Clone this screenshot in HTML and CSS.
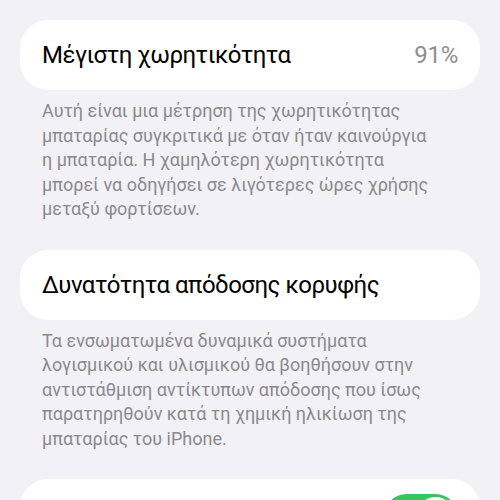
FILE: index.html
```html
<!DOCTYPE html>
<html lang="el">
<head>
  <meta charset="UTF-8">
  <meta name="viewport" content="width=device-width, initial-scale=1.0">
  <title>Υγεία μπαταρίας</title>
  <link rel="stylesheet" href="styles.css">
</head>
<body>
  <div class="settings">
    <div class="cell">
      <span class="cell-title">Μέγιστη χωρητικότητα</span>
      <span class="cell-value">91%</span>
    </div>
    <p class="footer">Αυτή είναι μια μέτρηση της χωρητικότητας<br>μπαταρίας συγκριτικά με όταν ήταν καινούργια<br>η μπαταρία. Η χαμηλότερη χωρητικότητα<br>μπορεί να οδηγήσει σε λιγότερες ώρες χρήσης<br>μεταξύ φορτίσεων.</p>

    <div class="cell">
      <span class="cell-title">Δυνατότητα απόδοσης κορυφής</span>
    </div>
    <p class="footer">Τα ενσωματωμένα δυναμικά συστήματα<br>λογισμικού και υλισμικού θα βοηθήσουν στην<br>αντιστάθμιση αντίκτυπων απόδοσης που ίσως<br>παρατηρηθούν κατά τη χημική ηλικίωση της<br>μπαταρίας του iPhone.</p>

    <div class="cell cell-toggle">
      <span class="toggle on"><span class="knob"></span></span>
    </div>
  </div>
</body>
</html>
```

FILE: styles.css
```css
body {
  margin: 0;
  background-color: #f2f1f6;
  font-family: Roboto, "Noto Sans", sans-serif;
}
.settings {
  padding: 20px 20px 0;
}
.cell {
  display: flex;
  align-items: center;
  justify-content: space-between;
  height: 70px;
  padding: 0 22px;
  background-color: #fff;
  border-radius: 28px;
}
.cell-toggle {
  justify-content: flex-end;
  align-items: flex-start;
  padding-top: 15px;
  box-sizing: border-box;
}
.cell-title {
  font-size: 24px;
  letter-spacing: -0.5px;
  color: #000;
}
.cell-value {
  font-size: 24px;
  letter-spacing: -0.3px;
  color: #8e8e93;
}
.footer {
  margin: 9px 0 28px;
  padding: 0 22px;
  font-size: 18px;
  line-height: 24.5px;
  color: #8a8a8e;
  white-space: nowrap;
}
.toggle {
  display: flex;
  align-items: center;
  width: 74px;
  height: 45px;
  border-radius: 23px;
  background-color: #e9e9ea;
  padding: 3px;
  box-sizing: border-box;
}
.toggle.on {
  background-color: #34c759;
  justify-content: flex-end;
}
.knob {
  width: 39px;
  height: 39px;
  border-radius: 50%;
  background-color: #fff;
}
```
